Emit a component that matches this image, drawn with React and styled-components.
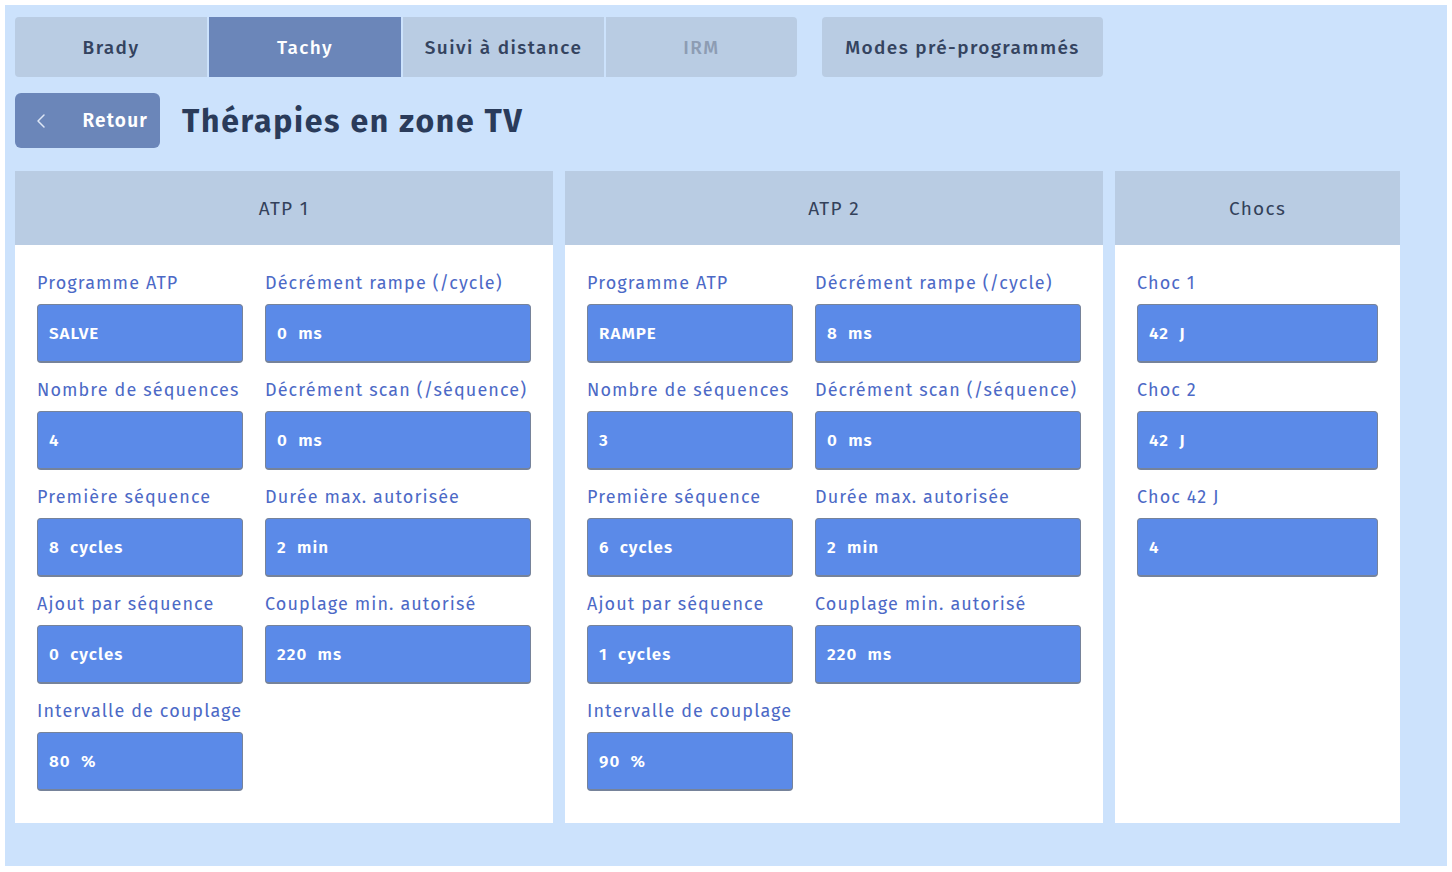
import React from 'react';
import styled, { createGlobalStyle } from 'styled-components';
import { ChevronLeft } from 'lucide-react';

const GlobalStyle = createGlobalStyle`
  html, body {
    margin: 0;
    padding: 0;
    background: #ffffff;
  }
  body {
    font-family: 'Fira Sans', 'Noto Sans', 'Open Sans', sans-serif;
  }
`;

const Screen = styled.div`
  margin: 5px;
  width: 1442px;
  height: 861px;
  box-sizing: border-box;
  background: #cce2fc;
  padding: 12px 10px;
  display: flex;
  flex-direction: column;
`;

const TabBar = styled.div`
  display: flex;
  height: 60px;
  gap: 25px;
`;

const TabGroup = styled.div`
  display: flex;
  gap: 2px;
  border-radius: 4px;
  overflow: hidden;
`;

const Tab = styled.div`
  width: ${p => p.$w}px;
  display: flex;
  align-items: center;
  justify-content: center;
  background: ${p => (p.$active ? '#6b86b9' : '#b9cce3')};
  color: ${p => (p.$active ? '#ffffff' : p.$disabled ? '#8d9cb3' : '#34435f')};
  font-size: 19px;
  font-weight: 500;
  letter-spacing: 1.4px;
  border-radius: ${p => (p.$alone ? '4px' : '0')};
`;

const TitleRow = styled.div`
  display: flex;
  align-items: center;
  gap: 22px;
  margin-top: 16px;
`;

const BackButton = styled.button`
  width: 145px;
  height: 55px;
  border: none;
  border-radius: 6px;
  background: #6b86b9;
  color: #ffffff;
  display: flex;
  align-items: center;
  padding: 0 12px 0 14px;
  box-sizing: border-box;
  font-family: inherit;
  font-size: 19px;
  font-weight: 600;
  letter-spacing: 1.2px;
  cursor: pointer;

  svg {
    color: #dde6f5;
  }

  span {
    margin-left: auto;
  }
`;

const Title = styled.h1`
  margin: 0;
  font-size: 32px;
  font-weight: 700;
  color: #2a3b5a;
  letter-spacing: 1.7px;
`;

const Panels = styled.div`
  display: flex;
  gap: 12px;
  margin-top: 23px;
  height: 652px;
`;

const Panel = styled.section`
  width: ${p => p.$w}px;
  background: #ffffff;
  display: flex;
  flex-direction: column;
`;

const PanelHeader = styled.div`
  height: 74px;
  background: #b9cce3;
  display: flex;
  align-items: center;
  justify-content: center;
  color: #33415a;
  font-size: 19px;
  letter-spacing: 1.3px;
`;

const FieldGrid = styled.div`
  display: grid;
  grid-template-columns: ${p => p.$cols};
  column-gap: 22px;
  row-gap: 16px;
  padding: 27px 22px 0;
  align-content: start;
`;

const Field = styled.div`
  display: flex;
  flex-direction: column;
  gap: 10px;
`;

const Label = styled.div`
  height: 22px;
  line-height: 22px;
  font-size: 18px;
  letter-spacing: 1.1px;
  color: #4c69c6;
  white-space: nowrap;
`;

const ValueBox = styled.div`
  height: 59px;
  box-sizing: border-box;
  background: #5b8ae8;
  border: 1px solid #76839a;
  border-bottom-width: 2px;
  border-radius: 4px;
  display: flex;
  align-items: center;
  padding: 0 11px;
  color: #ffffff;
  font-size: 17px;
  font-weight: 600;
  letter-spacing: 1px;
  white-space: pre;
`;

const atp1 = [
  ['Programme ATP', 'SALVE'],
  ['Décrément rampe (/cycle)', '0  ms'],
  ['Nombre de séquences', '4'],
  ['Décrément scan (/séquence)', '0  ms'],
  ['Première séquence', '8  cycles'],
  ['Durée max. autorisée', '2  min'],
  ['Ajout par séquence', '0  cycles'],
  ['Couplage min. autorisé', '220  ms'],
  ['Intervalle de couplage', '80  %'],
];

const atp2 = [
  ['Programme ATP', 'RAMPE'],
  ['Décrément rampe (/cycle)', '8  ms'],
  ['Nombre de séquences', '3'],
  ['Décrément scan (/séquence)', '0  ms'],
  ['Première séquence', '6  cycles'],
  ['Durée max. autorisée', '2  min'],
  ['Ajout par séquence', '1  cycles'],
  ['Couplage min. autorisé', '220  ms'],
  ['Intervalle de couplage', '90  %'],
];

const chocs = [
  ['Choc 1', '42  J'],
  ['Choc 2', '42  J'],
  ['Choc 42 J', '4'],
];

const Fields = ({ items, cols }) => (
  <FieldGrid $cols={cols}>
    {items.map(([label, value]) => (
      <Field key={label}>
        <Label>{label}</Label>
        <ValueBox>{value}</ValueBox>
      </Field>
    ))}
  </FieldGrid>
);

export default function App() {
  return (
    <>
      <GlobalStyle />
      <Screen>
        <TabBar>
          <TabGroup>
            <Tab $w={192}>Brady</Tab>
            <Tab $w={192} $active>Tachy</Tab>
            <Tab $w={201}>Suivi à distance</Tab>
            <Tab $w={191} $disabled>IRM</Tab>
          </TabGroup>
          <Tab $w={281} $alone>Modes pré-programmés</Tab>
        </TabBar>

        <TitleRow>
          <BackButton>
            <ChevronLeft size={24} strokeWidth={1.5} />
            <span>Retour</span>
          </BackButton>
          <Title>Thérapies en zone TV</Title>
        </TitleRow>

        <Panels>
          <Panel $w={538}>
            <PanelHeader>ATP 1</PanelHeader>
            <Fields items={atp1} cols="206px 266px" />
          </Panel>
          <Panel $w={538}>
            <PanelHeader>ATP 2</PanelHeader>
            <Fields items={atp2} cols="206px 266px" />
          </Panel>
          <Panel $w={285}>
            <PanelHeader>Chocs</PanelHeader>
            <Fields items={chocs} cols="1fr" />
          </Panel>
        </Panels>
      </Screen>
    </>
  );
}
